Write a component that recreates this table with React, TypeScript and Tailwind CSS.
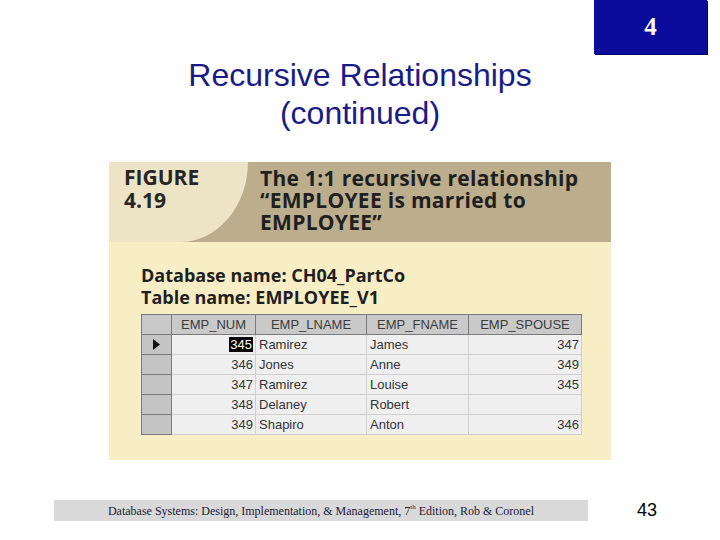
const rows = [
  { num: "345", lname: "Ramirez", fname: "James", spouse: "347", current: true },
  { num: "346", lname: "Jones", fname: "Anne", spouse: "349" },
  { num: "347", lname: "Ramirez", fname: "Louise", spouse: "345" },
  { num: "348", lname: "Delaney", fname: "Robert", spouse: "" },
  { num: "349", lname: "Shapiro", fname: "Anton", spouse: "346" },
];

function EmployeeTable() {
  return (
    <table className="border-collapse border border-[#6b6b6b] text-[13px] leading-none text-[#333] font-['Liberation_Sans',Arial,sans-serif]">
      <thead>
        <tr className="h-[20px] bg-[#c9c9c9] text-[#3c3c3c]">
          <th className="w-[30px] border border-[#7a7a7a]" />
          <th className="w-[84px] border border-[#7a7a7a] font-normal">EMP_NUM</th>
          <th className="w-[111px] border border-[#7a7a7a] font-normal">EMP_LNAME</th>
          <th className="w-[102px] border border-[#7a7a7a] font-normal">EMP_FNAME</th>
          <th className="w-[113px] border border-[#7a7a7a] font-normal">EMP_SPOUSE</th>
        </tr>
      </thead>
      <tbody>
        {rows.map((r) => (
          <tr key={r.num} className="h-[20px] bg-[#efefef]">
            <td className="border border-[#7a7a7a] bg-[#c4c4c4]">
              {r.current && (
                <svg width="9" height="11" viewBox="0 0 9 11" className="ml-[10px]">
                  <path d="M1 0 L8 5.5 L1 11 Z" fill="#111" />
                </svg>
              )}
            </td>
            <td className="border border-[#cfcfcf] pr-[2px] text-right">
              {r.current ? <span className="bg-black px-[1px] text-white">{r.num}</span> : r.num}
            </td>
            <td className="border border-[#cfcfcf] pl-[3px]">{r.lname}</td>
            <td className="border border-[#cfcfcf] pl-[3px]">{r.fname}</td>
            <td className="border border-[#cfcfcf] pr-[2px] text-right">{r.spouse}</td>
          </tr>
        ))}
      </tbody>
    </table>
  );
}

export default function App() {
  return (
    <div className="relative h-[540px] w-[720px] overflow-hidden bg-white">
      {/* slide number tab */}
      <div className="absolute right-[13px] top-0 flex h-[54px] w-[113px] items-center justify-center bg-[#0b0b9c] shadow-[1px_1px_0_#000060]">
        <span className="font-['Liberation_Serif',serif] text-[25px] font-bold text-white">4</span>
      </div>

      <div className="flex flex-col items-center pt-[56px]">
        <h1 className="text-center font-['Liberation_Sans',Arial,sans-serif] text-[32px] leading-[38px] text-[#1b1b86]">
          Recursive Relationships
          <br />
          (continued)
        </h1>
      </div>

      {/* figure */}
      <div className="ml-[109px] mt-[30px] flex h-[298px] w-[502px] flex-col bg-[#f8eec5] font-['Open_Sans',sans-serif]">
        <div className="flex h-[80px] bg-[#bcad8c]">
          <div className="h-full w-[139px] shrink-0 rounded-br-[68px_80px] bg-[#ede3c5] pl-[15px] pt-[4px] text-[21px] font-bold leading-[23px] text-[#262626]">
            FIGURE
            <br />
            4.19
          </div>
          <div className="pl-[12px] pt-[5px] text-[21px] font-bold leading-[22px] tracking-[0.3px] text-[#1f1f1f]">
            The 1:1 recursive relationship
            <br />
            “EMPLOYEE is married to
            <br />
            EMPLOYEE”
          </div>
        </div>
        <div className="pl-[32px] pt-[22px]">
          <div className="text-[18px] font-bold leading-[22px] text-[#1f1f1f]">
            Database name: CH04_PartCo
            <br />
            Table name: EMPLOYEE_V1
          </div>
          <div className="mt-[6px]">
            <EmployeeTable />
          </div>
        </div>
      </div>

      {/* footer */}
      <div className="mt-[37px] flex items-center">
        <div className="ml-[54px] flex h-[21px] w-[534px] items-center justify-center bg-[#d9d9d9] font-['Liberation_Serif',serif] text-[12px] text-[#1a1a3a]">
          Database Systems: Design, Implementation, &amp; Management, 7<sup className="text-[7px]">th</sup>&nbsp;Edition, Rob &amp; Coronel
        </div>
        <div className="ml-[49px] font-['Liberation_Sans',Arial,sans-serif] text-[18px] text-black">43</div>
      </div>
    </div>
  );
}
